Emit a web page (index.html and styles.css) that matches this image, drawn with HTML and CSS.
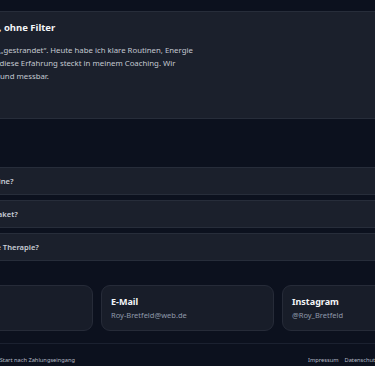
FILE: index.html
```html
<!DOCTYPE html>
<html lang="de">
<head>
<meta charset="utf-8">
<title>Roy Bretfeld – Coaching</title>
<link rel="stylesheet" href="styles.css">
</head>
<body>
<main class="page">
  <section class="story">
    <article class="story-card">
      <h3 class="story-title">Völlig ehrlich, ohne Filter</h3>
      <p class="story-text">
        <span class="ln">Beruflich war ich „gestrandet“. Heute habe ich klare Routinen, Energie</span>
        <span class="ln">und Fokus. Auch diese Erfahrung steckt in meinem Coaching. Wir</span>
        <span class="ln">arbeiten konkret und messbar.</span>
      </p>
    </article>
  </section>

  <section class="faq">
    <div class="faq-item">Geht es auch online?</div>
    <div class="faq-item">Was kostet ein Paket?</div>
    <div class="faq-item">Ist Coaching eine Therapie?</div>
  </section>

  <section class="contacts">
    <div class="contact-card">
      <div class="contact-title">Standort</div>
      <div class="contact-value">Deutschland</div>
    </div>
    <div class="contact-card">
      <div class="contact-title">E-Mail</div>
      <div class="contact-value">Roy-Bretfeld@web.de</div>
    </div>
    <div class="contact-card">
      <div class="contact-title">Instagram</div>
      <div class="contact-value">@Roy_Bretfeld</div>
    </div>
  </section>

  <footer class="footer">
    <div class="footer-note">© 2025 Roy Bretfeld · Start nach Zahlungseingang</div>
    <nav class="footer-links">
      <a href="#">Impressum</a>
      <a href="#">Datenschutz</a>
      <a href="#">AGB</a>
      <a href="#">Kontakt</a>
    </nav>
  </footer>
</main>
</body>
</html>
```
FILE: styles.css
```css
html, body {
  margin: 0;
  padding: 0;
}
body {
  background: #0c111e;
  font-family: "Noto Sans", "Open Sans", sans-serif;
  color: #c6cbd4;
  overflow: hidden;
  width: 375px;
  height: 366px;
}
.page {
  display: flex;
  flex-direction: column;
  align-items: center;
  padding-top: 11px;
}
.story, .faq, .contacts, .footer {
  width: 535px;
  flex: none;
  box-sizing: border-box;
}
.story-card {
  box-sizing: border-box;
  height: 108px;
  background: #1b202c;
  border: 1px solid #272d3a;
  border-radius: 8px;
  padding: 9px 16px 0;
}
.story-title {
  margin: 0;
  font-size: 9.5px;
  line-height: 14px;
  font-weight: 700;
  color: #f3f5f8;
  white-space: nowrap;
}
.story-text {
  margin: 8.5px 0 0;
  font-size: 7.8px;
  line-height: 13px;
  color: #c3c8d1;
}
.ln {
  display: block;
  white-space: nowrap;
}
.faq {
  margin-top: 48px;
  display: flex;
  flex-direction: column;
  gap: 5px;
}
.faq-item {
  box-sizing: border-box;
  height: 28px;
  display: flex;
  align-items: center;
  padding: 0 16px;
  background: #1b202c;
  border: 1px solid #272d3a;
  border-radius: 6px;
  font-size: 7.6px;
  font-weight: 600;
  color: #c9ced7;
  white-space: nowrap;
}
.contacts {
  margin-top: 24px;
  display: grid;
  grid-template-columns: repeat(3, 1fr);
  gap: 8px;
}
.contact-card {
  box-sizing: border-box;
  height: 46px;
  padding: 8.5px 9px;
  background: #181d29;
  border: 1px solid #262b38;
  border-radius: 9px;
}
.contact-title {
  font-size: 9px;
  line-height: 13px;
  font-weight: 700;
  color: #f3f5f8;
}
.contact-value {
  font-size: 7.5px;
  line-height: 13px;
  color: #8f99aa;
  margin-top: 1px;
}
.footer {
  margin-top: 12px;
  border-top: 1px solid #1b2130;
  padding: 11px 33px 0 22px;
  display: flex;
  justify-content: space-between;
  align-items: center;
  font-size: 5.7px;
  line-height: 10px;
  color: #b4bac5;
}
.footer-links {
  display: flex;
  gap: 6px;
}
.footer-links a {
  color: #b4bac5;
  text-decoration: none;
}
```
